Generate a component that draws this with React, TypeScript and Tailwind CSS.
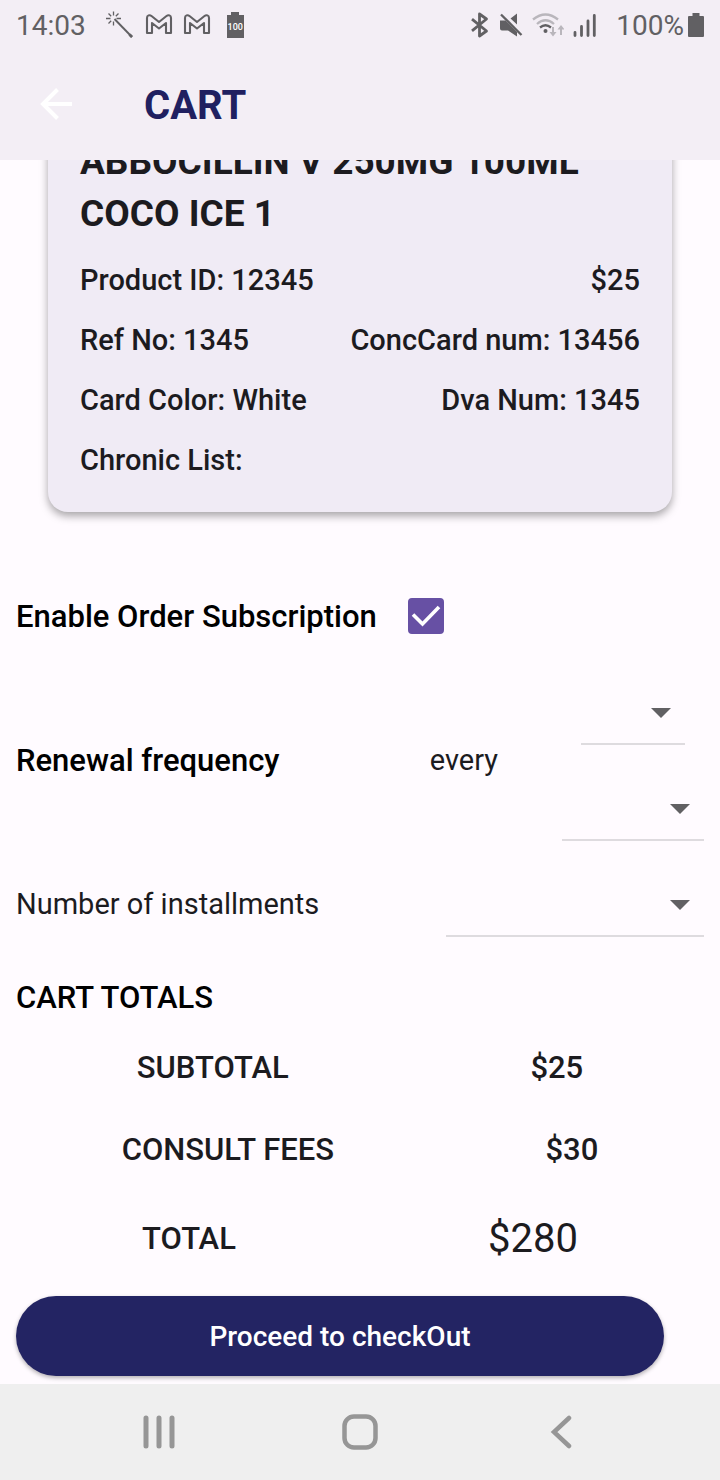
import { useId, useState } from "react";
import type { ReactNode } from "react";

function WandIcon() {
  return (
    <svg width="30" height="30" viewBox="0 0 30 30" className="text-[#616063]" fill="none" stroke="currentColor">
      <path d="M9.500 9 27 27" strokeWidth="1.900" />
      <path d="m24.500 24.500 2.500 2.500" strokeWidth="2.800" />
      <path d="M8.500 1.500v4M8.500 11.500v4M1 8.500h4.500M11.500 8.500H16M3.500 3.500l2.700 2.700M13.500 3.500l-2.700 2.700M3.500 13.500l2.700-2.700" strokeWidth="1.300" />
    </svg>
  );
}

function MailIcon() {
  return (
    <svg width="28" height="24" viewBox="0 0 28 24" className="text-[#616063]" fill="none" stroke="currentColor" strokeWidth="2.100">
      <path d="M2 20V5C2 2.200 4.600 1.500 6.500 3L14 9l7.500-6C23.400 1.500 26 2.200 26 5v15h-5V10l-7 5.500L7 10v10z" strokeLinejoin="round" />
    </svg>
  );
}

function BatteryChargeIcon() {
  return (
    <span className="flex w-[17px] flex-col items-center">
      <span className="h-[3px] w-2 bg-[#616063]" />
      <span className="flex h-[23px] w-full items-center justify-center bg-[#616063] text-[9px] font-medium text-white">
        100
      </span>
    </span>
  );
}

function BluetoothIcon() {
  return (
    <svg width="20" height="26" viewBox="0 0 20 26" className="text-[#616063]" fill="none" stroke="currentColor" strokeWidth="2.800">
      <path d="M2 7.200 16.500 19 9.500 24V2l7 5L2 18.800" strokeLinejoin="round" />
    </svg>
  );
}

function MuteIcon() {
  return (
    <svg width="24" height="26" viewBox="0 0 24 26" className="text-[#616063]">
      <path d="M1 8.500h5.500L18 20v4.500L9 18.500H3a2 2 0 0 1-2-2zM11.500 6.500 18 1.500v11z" fill="currentColor" />
      <path d="m2 2.500 20.500 20.500" stroke="currentColor" strokeWidth="2.300" />
    </svg>
  );
}

function WifiIcon() {
  return (
    <svg width="32" height="26" viewBox="0 0 32 26" fill="none" strokeWidth="2.300">
      <path d="M1 7.500Q13.500-2.500 26 7.500M5 12Q13.500 4.500 22 12" stroke="#b9b6bc" />
      <path d="M8 15.500q5.500-4.500 11 0" stroke="#616063" />
      <circle cx="13.500" cy="19" r="2" fill="#616063" />
      <path d="M21 15v7M29 23v-7" stroke="#b9b6bc" strokeWidth="2" />
      <path d="M17.500 20h7L21 24.500zM25.500 17.500h7L29 13z" fill="#b9b6bc" />
    </svg>
  );
}

function SignalIcon() {
  return (
    <svg width="23" height="26" viewBox="0 0 23 26" fill="none" stroke="#616063" strokeWidth="2.800" strokeLinecap="round">
      <path d="M2 20.500v3M8.500 14.500v9M15 9v14.500M21.300 3.500v20" />
    </svg>
  );
}

function BatteryIcon() {
  return (
    <svg width="16" height="25" viewBox="0 0 16 25" fill="#616063">
      <path d="M4.500 0h7v3H15a1 1 0 0 1 1 1v19a1 1 0 0 1-1 1H1a1 1 0 0 1-1-1V4a1 1 0 0 1 1-1h3.500z" />
    </svg>
  );
}

function StatusBar() {
  return (
    <div className="flex h-12 items-center justify-between px-4 pt-[2px] text-[28px] leading-8 text-[#616063]">
      <div className="flex items-center">
        <span className="pt-[2px]">14:03</span>
        <span className="ml-[19px] flex items-center gap-[10px]">
          <WandIcon />
          <MailIcon />
          <MailIcon />
        </span>
        <span className="ml-4">
          <BatteryChargeIcon />
        </span>
      </div>
      <div className="flex items-center">
        <span className="flex items-center gap-[9px]">
          <BluetoothIcon />
          <MuteIcon />
          <WifiIcon />
          <SignalIcon />
        </span>
        <span className="ml-5 mr-1 pt-[2px]">100%</span>
        <BatteryIcon />
      </div>
    </div>
  );
}

function Detail({ left, right }: { left: string; right?: string }) {
  return (
    <div className="flex h-[60px] items-center justify-between">
      <span>{left}</span>
      {right && <span>{right}</span>}
    </div>
  );
}

function Dropdown({ label, id, className }: { label?: string; id?: string; className: string }) {
  return (
    <div className={`relative h-16 border-b-2 border-[#dedbdf] ${className}`}>
      <select id={id} aria-label={label} className="h-full w-full appearance-none bg-transparent pr-12 pl-2 outline-none">
        <option value="" />
      </select>
      <svg width="20" height="10" viewBox="0 0 20 10" className="pointer-events-none absolute top-[27px] right-[14px]" fill="#616063">
        <path d="M0 0h20L10 10z" />
      </svg>
    </div>
  );
}

function TotalRow({ name, children, className }: { name: string; children: ReactNode; className: string }) {
  return (
    <div className={`flex items-center justify-around ${className}`}>
      <dt>{name}</dt>
      <dd>{children}</dd>
    </div>
  );
}

export default function App() {
  const [subscribed, setSubscribed] = useState(true);
  const subscriptionId = useId();
  const installmentsId = useId();

  return (
    <div className="flex min-h-screen flex-col bg-[#fffbff] font-['Roboto',sans-serif] text-[#1c1b1f]">
      <header className="bg-[#f3eef5]">
        <StatusBar />
        <div className="flex h-28 items-center">
          <button type="button" aria-label="Back" className="flex h-28 w-28 items-center justify-center">
            <svg width="32" height="32" viewBox="0 0 32 32" fill="none" stroke="#fff" strokeWidth="4">
              <path d="M32 16H3M17.500 1.500 3 16l14.500 14.500" />
            </svg>
          </button>
          <h1 className="ml-8 pt-1 text-[40px] font-bold leading-[48px] text-[#202060]">CART</h1>
        </div>
      </header>

      <main className="flex-1 overflow-hidden">
        <section className="mx-12 -mt-10 rounded-[20px] bg-[#f0ebf5] px-8 pt-4 pb-[21px] text-[29px] font-medium shadow-[0_4px_8px_rgba(0,0,0,0.35)]">
          <h2 className="mb-[11px] text-[37px] font-bold leading-[52px]">
            ABBOCILLIN V 250MG 100ML COCO ICE 1
          </h2>
          <Detail left="Product ID: 12345" right="$25" />
          <Detail left="Ref No: 1345" right="ConcCard num: 13456" />
          <Detail left="Card Color: White" right="Dva Num: 1345" />
          <Detail left="Chronic List:" />
        </section>

        <div className="mt-14 flex h-24 items-center gap-[31px] px-4">
          <label htmlFor={subscriptionId} className="pt-[2px] text-[31px] font-medium text-black">
            Enable Order Subscription
          </label>
          <span className="relative flex h-9 w-9">
            <input
              id={subscriptionId}
              type="checkbox"
              checked={subscribed}
              onChange={(event) => setSubscribed(event.target.checked)}
              className="h-9 w-9 appearance-none rounded-[4px] border-4 border-[#6750a4] checked:bg-[#6750a4]"
            />
            {subscribed && (
              <svg viewBox="0 0 36 36" className="pointer-events-none absolute inset-0 h-9 w-9" fill="none" stroke="#fff" strokeWidth="3.600">
                <path d="m5 16.500 9.500 9.500L31 9" />
              </svg>
            )}
          </span>
        </div>

        <div className="mt-[17px] flex items-center px-4">
          <span className="flex-1 text-[31px] font-medium text-black">Renewal frequency</span>
          <span className="mr-16 text-[29px]">every</span>
          <div className="flex w-[142px] flex-col items-center gap-8">
            <Dropdown label="Renewal interval" className="w-[104px]" />
            <Dropdown label="Renewal period" className="w-full" />
          </div>
        </div>

        <div className="mt-8 flex items-center justify-between px-4">
          <label htmlFor={installmentsId} className="text-[29px]">Number of installments</label>
          <Dropdown id={installmentsId} className="w-[258px]" />
        </div>

        <section className="mt-8 px-4 text-[31px] font-medium">
          <h2 className="flex h-[58px] items-center text-black">CART TOTALS</h2>
          <dl>
            <TotalRow name="SUBTOTAL" className="h-[82px]">$25</TotalRow>
            <TotalRow name="CONSULT FEES" className="h-[82px]">$30</TotalRow>
            <TotalRow name="TOTAL" className="h-24">
              <span className="text-[40px] font-normal">$280</span>
            </TotalRow>
          </dl>
        </section>

        <div className="mt-[9px] mb-2 mr-14 ml-4">
          <button
            type="button"
            className="h-20 w-full rounded-full bg-[#232463] pt-[2px] text-[28px] font-medium text-white shadow-[0_2px_4px_rgba(0,0,0,0.3)]"
          >
            Proceed to checkOut
          </button>
        </div>
      </main>

      <nav className="flex h-24 items-center justify-center gap-[145px] bg-[#efefef] text-[#969696]">
        <button type="button" aria-label="Recent apps" className="flex w-14 justify-center">
          <svg width="34" height="36" viewBox="0 0 34 36" fill="none" stroke="currentColor" strokeWidth="5" strokeLinecap="round">
            <path d="M4 4v28M17 4v28M30 4v28" />
          </svg>
        </button>
        <button type="button" aria-label="Home" className="flex w-14 justify-center">
          <svg width="36" height="36" viewBox="0 0 36 36" fill="none" stroke="currentColor" strokeWidth="4.500">
            <rect x="2.500" y="2.500" width="31" height="31" rx="9.500" />
          </svg>
        </button>
        <button type="button" aria-label="Back to previous screen" className="flex w-14 justify-center">
          <svg width="22" height="36" viewBox="0 0 22 36" fill="none" stroke="currentColor" strokeWidth="4.500" strokeLinecap="round">
            <path d="M19 4 4 18l15 14" />
          </svg>
        </button>
      </nav>
    </div>
  );
}
